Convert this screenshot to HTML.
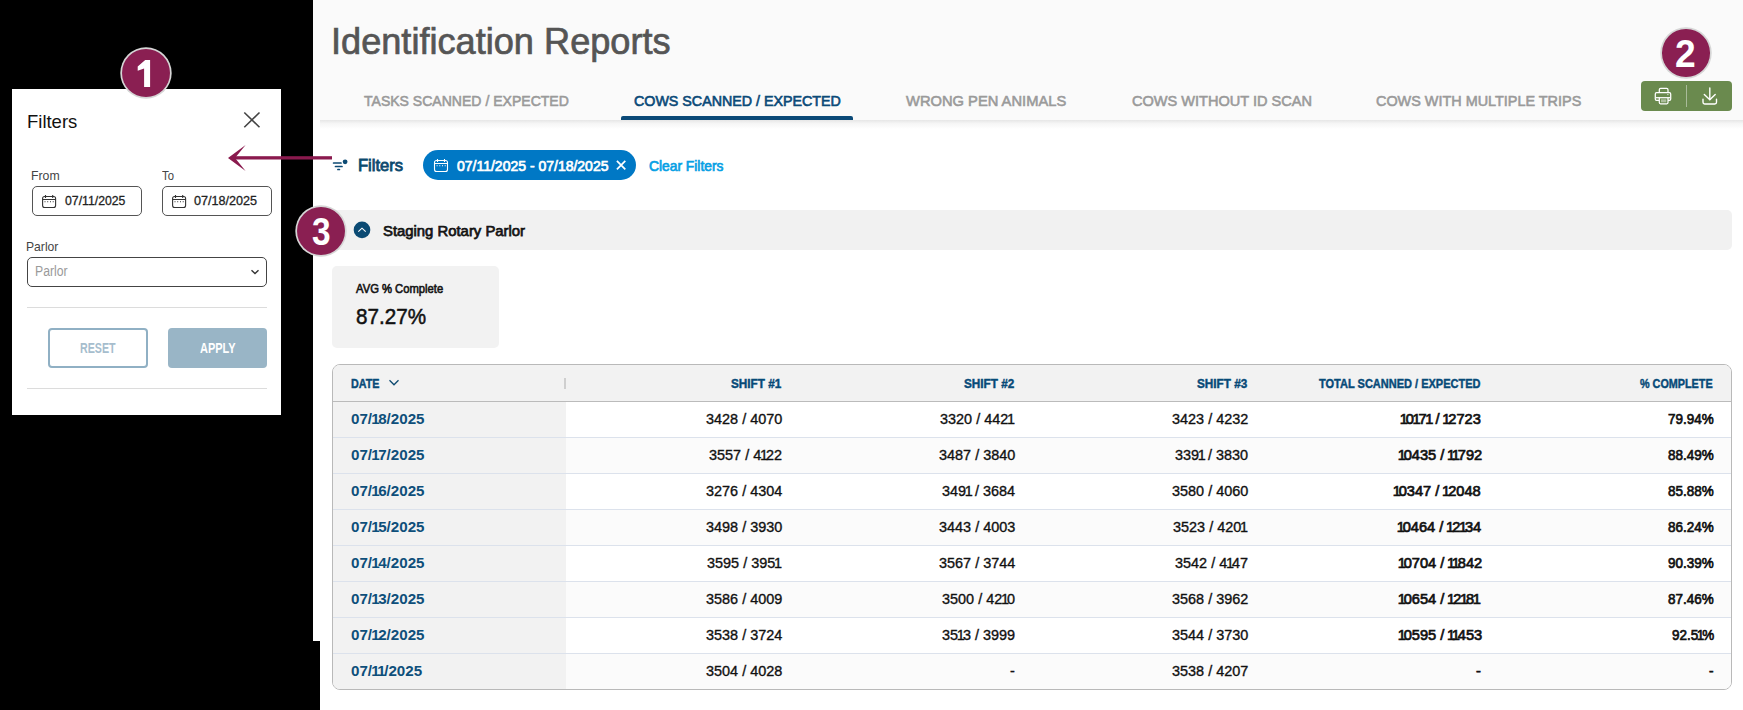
<!DOCTYPE html>
<html><head><meta charset="utf-8"><title>Identification Reports</title>
<style>
html,body{margin:0;padding:0;}
body{width:1743px;height:710px;position:relative;overflow:hidden;background:#000;font-family:"Liberation Sans", sans-serif;}
.a{position:absolute;box-sizing:border-box;}
.t{position:absolute;white-space:nowrap;transform-origin:0 0;font-family:"Liberation Sans", sans-serif;}
svg{position:absolute;overflow:visible;}
</style></head><body>
<!-- main page white -->
<div class="a" style="left:313px;top:0;width:1430px;height:641px;background:#fff"></div>
<div class="a" style="left:320px;top:641px;width:1423px;height:69px;background:#fff"></div>
<!-- header -->
<div class="a" style="left:313px;top:0;width:1430px;height:120px;background:#fafafa"></div>
<div class="a" style="left:320px;top:120px;width:1423px;height:9px;background:linear-gradient(#e6e6e6,#f6f6f6 40%,#fff)"></div>
<div class="a" style="left:621px;top:116px;width:232px;height:4px;background:#0b4a78;border-radius:2px 2px 0 0"></div>
<!-- green buttons -->
<div class="a" style="left:1641px;top:81px;width:91px;height:30px;background:#6a8a4e;border-radius:4px"></div>
<div class="a" style="left:1686px;top:85px;width:1px;height:22px;background:#a9bb99"></div>
<svg style="left:0;top:0" width="1743" height="710" viewBox="0 0 1743 710">
  <!-- print icon -->
  <g fill="none" stroke="#fff" stroke-width="1.25" stroke-linejoin="round">
    <path d="M1659.3 92.6 V89.8 Q1659.3 88.4 1660.7 88.4 H1666.6 Q1668 88.4 1668 89.8 V92.6"/>
    <path d="M1659.3 100.4 H1656.5 Q1655.3 100.4 1655.3 99.1 V94 Q1655.3 92.7 1656.6 92.7 H1669.4 Q1670.7 92.7 1670.7 94 V99.1 Q1670.7 100.4 1669.5 100.4 H1668"/>
    <path d="M1656 97.7 H1670"/>
    <path d="M1659.3 97.7 V102.6 Q1659.3 103.8 1660.5 103.8 H1666.8 Q1668 103.8 1668 102.6 V97.7"/>
  </g>
  <rect x="1661" y="99.3" width="5.3" height="3" fill="#fff" fill-opacity="0.45"/>
  <circle cx="1667.9" cy="94.6" r="0.6" fill="#fff"/>
  <!-- download icon -->
  <g fill="none" stroke="#fff" stroke-width="1.4" stroke-linecap="round" stroke-linejoin="round">
    <path d="M1709.8 88 V99.5"/>
    <path d="M1704.3 94.5 L1709.8 99.8 L1715.2 94.5"/>
    <path d="M1703 99.3 V102.3 Q1703 104 1704.7 104 H1714.8 Q1716.5 104 1716.5 102.3 V99.3"/>
  </g>
</svg>
<!-- filter panel -->
<div class="a" style="left:12px;top:89px;width:269px;height:326px;background:#fff"></div>
<div class="a" style="left:32px;top:186px;width:110px;height:30px;border:1.3px solid #555;border-radius:5px"></div>
<div class="a" style="left:162px;top:186px;width:110px;height:30px;border:1.3px solid #555;border-radius:5px"></div>
<div class="a" style="left:27px;top:257px;width:240px;height:30px;border:1.3px solid #444;border-radius:5px"></div>
<div class="a" style="left:27px;top:307px;width:240px;height:1px;background:#dcdcdc"></div>
<div class="a" style="left:48px;top:328px;width:100px;height:40px;border:2px solid #90b0c4;border-radius:4px"></div>
<div class="a" style="left:168px;top:328px;width:99px;height:40px;background:#99b5c6;border-radius:4px"></div>
<div class="a" style="left:27px;top:388px;width:240px;height:1px;background:#dcdcdc"></div>
<svg style="left:0;top:0" width="1743" height="710" viewBox="0 0 1743 710">
  <!-- close X -->
  <path d="M244.3 112.5 L259.5 127.3 M259.5 112.5 L244.3 127.3" stroke="#444" stroke-width="1.6" fill="none"/>
  <!-- calendar icons in inputs -->
  <g fill="none" stroke="#333" stroke-width="1.1">
    <rect x="42.6" y="196.5" width="13" height="11" rx="2"/>
    <path d="M42.6 199.5 H55.6 M45.5 195 V198 M52.7 195 V198"/>
    <rect x="172.6" y="196.5" width="13" height="11" rx="2"/>
    <path d="M172.6 199.5 H185.6 M175.5 195 V198 M182.7 195 V198"/>
  </g>
  <g fill="#666">
    <rect x="44.5" y="201" width="1" height="1.3"/><rect x="47.2" y="201" width="1" height="1.3"/><rect x="50" y="201" width="1" height="1.3"/><rect x="52.7" y="201" width="1" height="1.3"/>
    <rect x="174.5" y="201" width="1" height="1.3"/><rect x="177.2" y="201" width="1" height="1.3"/><rect x="180" y="201" width="1" height="1.3"/><rect x="182.7" y="201" width="1" height="1.3"/>
  </g>
  <!-- select chevron -->
  <path d="M251.5 270.3 L255 273.6 L258.5 270.3" stroke="#333" stroke-width="1.4" fill="none"/>
  <!-- arrow -->
  <rect x="234" y="156.2" width="98" height="3.3" fill="#8a1a4e"/>
  <path d="M228 157.9 L245.6 145 L235 157.9 L245.6 171 Z" fill="#8a1a4e"/>
  <!-- filter icon -->
  <g stroke="#0c4a73" stroke-width="1.7" stroke-linecap="round">
    <path d="M333.6 163 H341"/><path d="M335.5 166.5 H342"/><path d="M337.9 169.5 H339.4"/>
  </g>
  <circle cx="345.1" cy="161.8" r="2.4" fill="#0c4a73"/>
</svg>
<!-- chip -->
<div class="a" style="left:423px;top:150px;width:212.5px;height:30px;background:#0078c5;border-radius:15px"></div>
<svg style="left:0;top:0" width="1743" height="710" viewBox="0 0 1743 710">
  <g fill="none" stroke="#fff" stroke-width="1.1">
    <rect x="434.5" y="160.5" width="13" height="11" rx="2"/>
    <path d="M434.5 163.5 H447.5 M437.5 159 V162 M444.5 159 V162"/>
  </g>
  <g fill="#cfe4f4"><rect x="436.6" y="165" width="1" height="1.3"/><rect x="439.3" y="165" width="1" height="1.3"/><rect x="442" y="165" width="1" height="1.3"/><rect x="444.7" y="165" width="1" height="1.3"/></g>
  <path d="M616.9 160.9 L625.3 169.3 M625.3 160.9 L616.9 169.3" stroke="#fff" stroke-width="1.7" fill="none"/>
</svg>
<!-- staging bar -->
<div class="a" style="left:332px;top:210px;width:1400px;height:40px;background:#f1f1f1;border-radius:5px"></div>
<svg style="left:0;top:0" width="1743" height="710" viewBox="0 0 1743 710">
  <circle cx="362" cy="229.9" r="8.3" fill="#0b4a73"/>
  <path d="M358.3 231.6 L362 228.2 L365.7 231.6" stroke="#fff" stroke-width="1.1" fill="none"/>
</svg>
<!-- card -->
<div class="a" style="left:332px;top:266px;width:167px;height:82px;background:#f2f2f2;border-radius:5px"></div>
<!-- table -->
<div class="a" style="left:332px;top:364px;width:1400px;height:326px;border:1px solid #b9b9b9;border-radius:8px;overflow:hidden;background:#fff">
  <div class="a" style="left:0;top:0;width:1398px;height:37px;background:#f2f2f2;border-bottom:1px solid #bbb"></div>
  <div class="a" style="left:0;top:37px;width:233px;height:288px;background:#f2f2f2"></div>
  <div class="a" style="left:233px;top:73px;width:1165px;height:36px;background:#fbfbfb"></div>
  <div class="a" style="left:233px;top:145px;width:1165px;height:36px;background:#fbfbfb"></div>
  <div class="a" style="left:233px;top:217px;width:1165px;height:36px;background:#fbfbfb"></div>
  <div class="a" style="left:233px;top:289px;width:1165px;height:36px;background:#fbfbfb"></div>
  <div class="a" style="left:0;top:72px;width:1398px;height:1px;background:#dce2ec"></div>
  <div class="a" style="left:0;top:108px;width:1398px;height:1px;background:#dce2ec"></div>
  <div class="a" style="left:0;top:144px;width:1398px;height:1px;background:#dce2ec"></div>
  <div class="a" style="left:0;top:180px;width:1398px;height:1px;background:#dce2ec"></div>
  <div class="a" style="left:0;top:216px;width:1398px;height:1px;background:#dce2ec"></div>
  <div class="a" style="left:0;top:252px;width:1398px;height:1px;background:#dce2ec"></div>
  <div class="a" style="left:0;top:288px;width:1398px;height:1px;background:#dce2ec"></div>
  <div class="a" style="left:231px;top:13px;width:2px;height:11px;background:#cfcfcf"></div>
</div>
<svg style="left:0;top:0" width="1743" height="710" viewBox="0 0 1743 710">
  <path d="M389.5 380.3 L394 384.8 L398.5 380.3" stroke="#0d4a70" stroke-width="1.3" fill="none"/>
</svg>
<!-- badges -->
<div class="a" style="left:121.85px;top:48.6px;width:48.5px;height:48.5px;border-radius:50%;background:#8a1f52;box-shadow:0 0 0 1.7px #d6d6d6"></div>
<div class="a" style="left:1662.2px;top:29.3px;width:47.6px;height:47.6px;border-radius:50%;background:#8a1f52;box-shadow:0 0 0 1.7px #d6d6d6"></div>
<div class="a" style="left:297.4px;top:207.1px;width:48px;height:48px;border-radius:50%;background:#8a1f52;box-shadow:0 0 0 1.7px #d6d6d6"></div>
<svg style="left:0;top:0" width="1743" height="710" viewBox="0 0 1743 710">
  <path d="M145.2 59.9 H150.1 V86.9 H144.1 V68.4 L137.7 70.7 V66.6 Z" fill="#fff"/>
</svg>


<span class="t" style="left:331.39px;top:24.00px;font-size:36px;line-height:36px;font-weight:400;color:#555;transform:scaleX(1.0042);-webkit-text-stroke:0.7px #555">Identification Reports</span>
<span class="t" style="left:364.30px;top:93.00px;font-size:15px;line-height:15px;font-weight:400;color:#9a9a9a;transform:scaleX(0.9356);-webkit-text-stroke:0.6px #9a9a9a">TASKS SCANNED / EXPECTED</span>
<span class="t" style="left:634.00px;top:93.00px;font-size:15px;line-height:15px;font-weight:400;color:#0b4a78;transform:scaleX(0.9509);-webkit-text-stroke:0.65px #0b4a78">COWS SCANNED / EXPECTED</span>
<span class="t" style="left:905.70px;top:93.00px;font-size:15px;line-height:15px;font-weight:400;color:#9a9a9a;transform:scaleX(0.9806);-webkit-text-stroke:0.6px #9a9a9a">WRONG PEN ANIMALS</span>
<span class="t" style="left:1131.70px;top:93.00px;font-size:15px;line-height:15px;font-weight:400;color:#9a9a9a;transform:scaleX(0.9703);-webkit-text-stroke:0.6px #9a9a9a">COWS WITHOUT ID SCAN</span>
<span class="t" style="left:1375.80px;top:93.00px;font-size:15px;line-height:15px;font-weight:400;color:#9a9a9a;transform:scaleX(0.9608);-webkit-text-stroke:0.6px #9a9a9a">COWS WITH MULTIPLE TRIPS</span>
<span class="t" style="left:357.97px;top:157.80px;font-size:16px;line-height:16px;font-weight:400;color:#0c4a6e;transform:scaleX(1.0340);-webkit-text-stroke:0.8px #0c4a6e">Filters</span>
<span class="t" style="left:457.00px;top:158.90px;font-size:14.5px;line-height:14.5px;font-weight:400;color:#fff;transform:scaleX(0.9650);-webkit-text-stroke:0.7px #fff">07/11/2025 - 07/18/2025</span>
<span class="t" style="left:648.50px;top:158.50px;font-size:14.5px;line-height:14.5px;font-weight:400;color:#07a0e4;transform:scaleX(0.9525);-webkit-text-stroke:0.7px #07a0e4">Clear Filters</span>
<span class="t" style="left:382.80px;top:223.00px;font-size:15px;line-height:15px;font-weight:400;color:#151515;transform:scaleX(0.9902);-webkit-text-stroke:0.75px #151515">Staging Rotary Parlor</span>
<span class="t" style="left:356.20px;top:282.90px;font-size:12px;line-height:12px;font-weight:400;color:#151515;transform:scaleX(0.9361);-webkit-text-stroke:0.6px #151515">AVG % Complete</span>
<span class="t" style="left:356.00px;top:305.50px;font-size:22px;line-height:22px;font-weight:400;color:#111;transform:scaleX(0.9385);-webkit-text-stroke:0.5px #111">87.27%</span>
<span class="t" style="left:351.40px;top:377.20px;font-size:13.0px;line-height:13.0px;font-weight:700;color:#074a78;transform:scaleX(0.8258);-webkit-text-stroke:0.45px #074a78">DATE</span>
<span class="t" style="left:731.40px;top:377.20px;font-size:13.0px;line-height:13.0px;font-weight:700;color:#074a78;transform:scaleX(0.9026);-webkit-text-stroke:0.45px #074a78">SHIFT #1</span>
<span class="t" style="left:963.70px;top:377.20px;font-size:13.0px;line-height:13.0px;font-weight:700;color:#074a78;transform:scaleX(0.9026);-webkit-text-stroke:0.45px #074a78">SHIFT #2</span>
<span class="t" style="left:1197.00px;top:377.20px;font-size:13.0px;line-height:13.0px;font-weight:700;color:#074a78;transform:scaleX(0.9026);-webkit-text-stroke:0.45px #074a78">SHIFT #3</span>
<span class="t" style="left:1318.60px;top:377.20px;font-size:13.0px;line-height:13.0px;font-weight:700;color:#074a78;transform:scaleX(0.8471);-webkit-text-stroke:0.45px #074a78">TOTAL SCANNED / EXPECTED</span>
<span class="t" style="left:1639.90px;top:377.20px;font-size:13.0px;line-height:13.0px;font-weight:700;color:#074a78;transform:scaleX(0.8310);-webkit-text-stroke:0.45px #074a78">% COMPLETE</span>
<span class="t" style="left:351.40px;top:412.20px;font-size:14.5px;line-height:14.5px;font-weight:700;color:#0e4f7a;transform:scaleX(1.0454)">07/<span style="margin-left:-0.92px;margin-right:-1.38px">1</span>8/2025</span>
<span class="t" style="left:705.80px;top:412.20px;font-size:14.5px;line-height:14.5px;font-weight:400;color:#111;transform:scaleX(0.9956);-webkit-text-stroke:0.35px #111">3428 / 4070</span>
<span class="t" style="left:940.08px;top:412.20px;font-size:14.5px;line-height:14.5px;font-weight:400;color:#111;transform:scaleX(0.9956);-webkit-text-stroke:0.35px #111">3320 / 442<span style="margin-left:-1.29px;margin-right:-1.93px">1</span></span>
<span class="t" style="left:1171.80px;top:412.20px;font-size:14.5px;line-height:14.5px;font-weight:400;color:#111;transform:scaleX(0.9956);-webkit-text-stroke:0.35px #111">3423 / 4232</span>
<span class="t" style="left:1401.37px;top:412.20px;font-size:14.5px;line-height:14.5px;font-weight:400;color:#111;transform:scaleX(1.0083);-webkit-text-stroke:0.7px #111"><span style="margin-left:-1.37px;margin-right:-2.05px">1</span>0<span style="margin-left:-1.37px;margin-right:-2.05px">1</span>7<span style="margin-left:-1.37px;margin-right:-2.05px">1</span> / <span style="margin-left:-1.37px;margin-right:-2.05px">1</span>2723</span>
<span class="t" style="left:1668.30px;top:412.20px;font-size:14.5px;line-height:14.5px;font-weight:400;color:#111;transform:scaleX(0.9273);-webkit-text-stroke:0.7px #111">79.94%</span>
<span class="t" style="left:351.40px;top:448.20px;font-size:14.5px;line-height:14.5px;font-weight:700;color:#0e4f7a;transform:scaleX(1.0454)">07/<span style="margin-left:-0.92px;margin-right:-1.38px">1</span>7/2025</span>
<span class="t" style="left:709.00px;top:448.20px;font-size:14.5px;line-height:14.5px;font-weight:400;color:#111;transform:scaleX(0.9956);-webkit-text-stroke:0.35px #111">3557 / 4<span style="margin-left:-1.29px;margin-right:-1.93px">1</span>22</span>
<span class="t" style="left:938.80px;top:448.20px;font-size:14.5px;line-height:14.5px;font-weight:400;color:#111;transform:scaleX(0.9956);-webkit-text-stroke:0.35px #111">3487 / 3840</span>
<span class="t" style="left:1175.00px;top:448.20px;font-size:14.5px;line-height:14.5px;font-weight:400;color:#111;transform:scaleX(0.9956);-webkit-text-stroke:0.35px #111">339<span style="margin-left:-1.29px;margin-right:-1.93px">1</span> / 3830</span>
<span class="t" style="left:1399.01px;top:448.20px;font-size:14.5px;line-height:14.5px;font-weight:400;color:#111;transform:scaleX(1.0083);-webkit-text-stroke:0.7px #111"><span style="margin-left:-1.37px;margin-right:-2.05px">1</span>0435 / <span style="margin-left:-1.37px;margin-right:-2.05px">1</span><span style="margin-left:-1.37px;margin-right:-2.05px">1</span>792</span>
<span class="t" style="left:1668.30px;top:448.20px;font-size:14.5px;line-height:14.5px;font-weight:400;color:#111;transform:scaleX(0.9273);-webkit-text-stroke:0.7px #111">88.49%</span>
<span class="t" style="left:351.40px;top:484.20px;font-size:14.5px;line-height:14.5px;font-weight:700;color:#0e4f7a;transform:scaleX(1.0454)">07/<span style="margin-left:-0.92px;margin-right:-1.38px">1</span>6/2025</span>
<span class="t" style="left:705.80px;top:484.20px;font-size:14.5px;line-height:14.5px;font-weight:400;color:#111;transform:scaleX(0.9956);-webkit-text-stroke:0.35px #111">3276 / 4304</span>
<span class="t" style="left:942.00px;top:484.20px;font-size:14.5px;line-height:14.5px;font-weight:400;color:#111;transform:scaleX(0.9956);-webkit-text-stroke:0.35px #111">349<span style="margin-left:-1.29px;margin-right:-1.93px">1</span> / 3684</span>
<span class="t" style="left:1171.80px;top:484.20px;font-size:14.5px;line-height:14.5px;font-weight:400;color:#111;transform:scaleX(0.9956);-webkit-text-stroke:0.35px #111">3580 / 4060</span>
<span class="t" style="left:1394.47px;top:484.20px;font-size:14.5px;line-height:14.5px;font-weight:400;color:#111;transform:scaleX(1.0083);-webkit-text-stroke:0.7px #111"><span style="margin-left:-1.37px;margin-right:-2.05px">1</span>0347 / <span style="margin-left:-1.37px;margin-right:-2.05px">1</span>2048</span>
<span class="t" style="left:1668.30px;top:484.20px;font-size:14.5px;line-height:14.5px;font-weight:400;color:#111;transform:scaleX(0.9273);-webkit-text-stroke:0.7px #111">85.88%</span>
<span class="t" style="left:351.40px;top:520.20px;font-size:14.5px;line-height:14.5px;font-weight:700;color:#0e4f7a;transform:scaleX(1.0454)">07/<span style="margin-left:-0.92px;margin-right:-1.38px">1</span>5/2025</span>
<span class="t" style="left:705.80px;top:520.20px;font-size:14.5px;line-height:14.5px;font-weight:400;color:#111;transform:scaleX(0.9956);-webkit-text-stroke:0.35px #111">3498 / 3930</span>
<span class="t" style="left:938.80px;top:520.20px;font-size:14.5px;line-height:14.5px;font-weight:400;color:#111;transform:scaleX(0.9956);-webkit-text-stroke:0.35px #111">3443 / 4003</span>
<span class="t" style="left:1173.08px;top:520.20px;font-size:14.5px;line-height:14.5px;font-weight:400;color:#111;transform:scaleX(0.9956);-webkit-text-stroke:0.35px #111">3523 / 420<span style="margin-left:-1.29px;margin-right:-1.93px">1</span></span>
<span class="t" style="left:1397.92px;top:520.20px;font-size:14.5px;line-height:14.5px;font-weight:400;color:#111;transform:scaleX(1.0083);-webkit-text-stroke:0.7px #111"><span style="margin-left:-1.37px;margin-right:-2.05px">1</span>0464 / <span style="margin-left:-1.37px;margin-right:-2.05px">1</span>2<span style="margin-left:-1.37px;margin-right:-2.05px">1</span>34</span>
<span class="t" style="left:1668.30px;top:520.20px;font-size:14.5px;line-height:14.5px;font-weight:400;color:#111;transform:scaleX(0.9273);-webkit-text-stroke:0.7px #111">86.24%</span>
<span class="t" style="left:351.40px;top:556.20px;font-size:14.5px;line-height:14.5px;font-weight:700;color:#0e4f7a;transform:scaleX(1.0454)">07/<span style="margin-left:-0.92px;margin-right:-1.38px">1</span>4/2025</span>
<span class="t" style="left:707.08px;top:556.20px;font-size:14.5px;line-height:14.5px;font-weight:400;color:#111;transform:scaleX(0.9956);-webkit-text-stroke:0.35px #111">3595 / 395<span style="margin-left:-1.29px;margin-right:-1.93px">1</span></span>
<span class="t" style="left:938.80px;top:556.20px;font-size:14.5px;line-height:14.5px;font-weight:400;color:#111;transform:scaleX(0.9956);-webkit-text-stroke:0.35px #111">3567 / 3744</span>
<span class="t" style="left:1175.00px;top:556.20px;font-size:14.5px;line-height:14.5px;font-weight:400;color:#111;transform:scaleX(0.9956);-webkit-text-stroke:0.35px #111">3542 / 4<span style="margin-left:-1.29px;margin-right:-1.93px">1</span>47</span>
<span class="t" style="left:1399.01px;top:556.20px;font-size:14.5px;line-height:14.5px;font-weight:400;color:#111;transform:scaleX(1.0083);-webkit-text-stroke:0.7px #111"><span style="margin-left:-1.37px;margin-right:-2.05px">1</span>0704 / <span style="margin-left:-1.37px;margin-right:-2.05px">1</span><span style="margin-left:-1.37px;margin-right:-2.05px">1</span>842</span>
<span class="t" style="left:1668.30px;top:556.20px;font-size:14.5px;line-height:14.5px;font-weight:400;color:#111;transform:scaleX(0.9273);-webkit-text-stroke:0.7px #111">90.39%</span>
<span class="t" style="left:351.40px;top:592.20px;font-size:14.5px;line-height:14.5px;font-weight:700;color:#0e4f7a;transform:scaleX(1.0454)">07/<span style="margin-left:-0.92px;margin-right:-1.38px">1</span>3/2025</span>
<span class="t" style="left:705.80px;top:592.20px;font-size:14.5px;line-height:14.5px;font-weight:400;color:#111;transform:scaleX(0.9956);-webkit-text-stroke:0.35px #111">3586 / 4009</span>
<span class="t" style="left:942.00px;top:592.20px;font-size:14.5px;line-height:14.5px;font-weight:400;color:#111;transform:scaleX(0.9956);-webkit-text-stroke:0.35px #111">3500 / 42<span style="margin-left:-1.29px;margin-right:-1.93px">1</span>0</span>
<span class="t" style="left:1171.80px;top:592.20px;font-size:14.5px;line-height:14.5px;font-weight:400;color:#111;transform:scaleX(0.9956);-webkit-text-stroke:0.35px #111">3568 / 3962</span>
<span class="t" style="left:1399.30px;top:592.20px;font-size:14.5px;line-height:14.5px;font-weight:400;color:#111;transform:scaleX(1.0083);-webkit-text-stroke:0.7px #111"><span style="margin-left:-1.37px;margin-right:-2.05px">1</span>0654 / <span style="margin-left:-1.37px;margin-right:-2.05px">1</span>2<span style="margin-left:-1.37px;margin-right:-2.05px">1</span>8<span style="margin-left:-1.37px;margin-right:-2.05px">1</span></span>
<span class="t" style="left:1668.30px;top:592.20px;font-size:14.5px;line-height:14.5px;font-weight:400;color:#111;transform:scaleX(0.9273);-webkit-text-stroke:0.7px #111">87.46%</span>
<span class="t" style="left:351.40px;top:628.20px;font-size:14.5px;line-height:14.5px;font-weight:700;color:#0e4f7a;transform:scaleX(1.0454)">07/<span style="margin-left:-0.92px;margin-right:-1.38px">1</span>2/2025</span>
<span class="t" style="left:705.80px;top:628.20px;font-size:14.5px;line-height:14.5px;font-weight:400;color:#111;transform:scaleX(0.9956);-webkit-text-stroke:0.35px #111">3538 / 3724</span>
<span class="t" style="left:942.00px;top:628.20px;font-size:14.5px;line-height:14.5px;font-weight:400;color:#111;transform:scaleX(0.9956);-webkit-text-stroke:0.35px #111">35<span style="margin-left:-1.29px;margin-right:-1.93px">1</span>3 / 3999</span>
<span class="t" style="left:1171.80px;top:628.20px;font-size:14.5px;line-height:14.5px;font-weight:400;color:#111;transform:scaleX(0.9956);-webkit-text-stroke:0.35px #111">3544 / 3730</span>
<span class="t" style="left:1399.01px;top:628.20px;font-size:14.5px;line-height:14.5px;font-weight:400;color:#111;transform:scaleX(1.0083);-webkit-text-stroke:0.7px #111"><span style="margin-left:-1.37px;margin-right:-2.05px">1</span>0595 / <span style="margin-left:-1.37px;margin-right:-2.05px">1</span><span style="margin-left:-1.37px;margin-right:-2.05px">1</span>453</span>
<span class="t" style="left:1671.80px;top:628.20px;font-size:14.5px;line-height:14.5px;font-weight:400;color:#111;transform:scaleX(0.9273);-webkit-text-stroke:0.7px #111">92.5<span style="margin-left:-1.51px;margin-right:-2.26px">1</span>%</span>
<span class="t" style="left:351.40px;top:664.20px;font-size:14.5px;line-height:14.5px;font-weight:700;color:#0e4f7a;transform:scaleX(1.0454)">07/<span style="margin-left:-0.92px;margin-right:-1.38px">1</span><span style="margin-left:-0.92px;margin-right:-1.38px">1</span>/2025</span>
<span class="t" style="left:705.80px;top:664.20px;font-size:14.5px;line-height:14.5px;font-weight:400;color:#111;transform:scaleX(0.9956);-webkit-text-stroke:0.35px #111">3504 / 4028</span>
<span class="t" style="left:1010.02px;top:664.20px;font-size:14.5px;line-height:14.5px;font-weight:400;color:#111;transform:scaleX(0.9956);-webkit-text-stroke:0.35px #111">-</span>
<span class="t" style="left:1171.80px;top:664.20px;font-size:14.5px;line-height:14.5px;font-weight:400;color:#111;transform:scaleX(0.9956);-webkit-text-stroke:0.35px #111">3538 / 4207</span>
<span class="t" style="left:1475.96px;top:664.20px;font-size:14.5px;line-height:14.5px;font-weight:400;color:#111;transform:scaleX(1.0083);-webkit-text-stroke:0.7px #111">-</span>
<span class="t" style="left:1709.36px;top:664.20px;font-size:14.5px;line-height:14.5px;font-weight:400;color:#111;transform:scaleX(0.9273);-webkit-text-stroke:0.7px #111">-</span>
<span class="t" style="left:26.73px;top:112.00px;font-size:19.0px;line-height:19.0px;font-weight:400;color:#111;transform:scaleX(0.9717)">Filters</span>
<span class="t" style="left:31.36px;top:169.00px;font-size:13.0px;line-height:13.0px;font-weight:400;color:#444;transform:scaleX(0.9439)">From</span>
<span class="t" style="left:162.00px;top:169.00px;font-size:13.0px;line-height:13.0px;font-weight:400;color:#444;transform:scaleX(0.8667)">To</span>
<span class="t" style="left:64.50px;top:194.00px;font-size:13.0px;line-height:13.0px;font-weight:400;color:#222;transform:scaleX(0.9426);-webkit-text-stroke:0.3px #222">07/11/2025</span>
<span class="t" style="left:194.40px;top:194.00px;font-size:13.0px;line-height:13.0px;font-weight:400;color:#222;transform:scaleX(0.9702);-webkit-text-stroke:0.3px #222">07/18/2025</span>
<span class="t" style="left:26.47px;top:240.00px;font-size:13.0px;line-height:13.0px;font-weight:400;color:#444;transform:scaleX(0.9345)">Parlor</span>
<span class="t" style="left:34.52px;top:264.30px;font-size:14.0px;line-height:14.0px;font-weight:400;color:#9a9a9a;transform:scaleX(0.8751)">Parlor</span>
<span class="t" style="left:80.00px;top:340.60px;font-size:14.5px;line-height:14.5px;font-weight:700;color:#a6bdcd;transform:scaleX(0.7363)">RESET</span>
<span class="t" style="left:199.50px;top:340.60px;font-size:14.5px;line-height:14.5px;font-weight:700;color:#fff;transform:scaleX(0.7583)">APPLY</span>
<span class="t" style="left:1674.82px;top:35.10px;font-size:38px;line-height:38px;font-weight:700;color:#fff;transform:scaleX(0.9789)">2</span>
<span class="t" style="left:312.40px;top:211.80px;font-size:39.0px;line-height:39.0px;font-weight:700;color:#fff;transform:scaleX(0.8571)">3</span>
</body></html>
